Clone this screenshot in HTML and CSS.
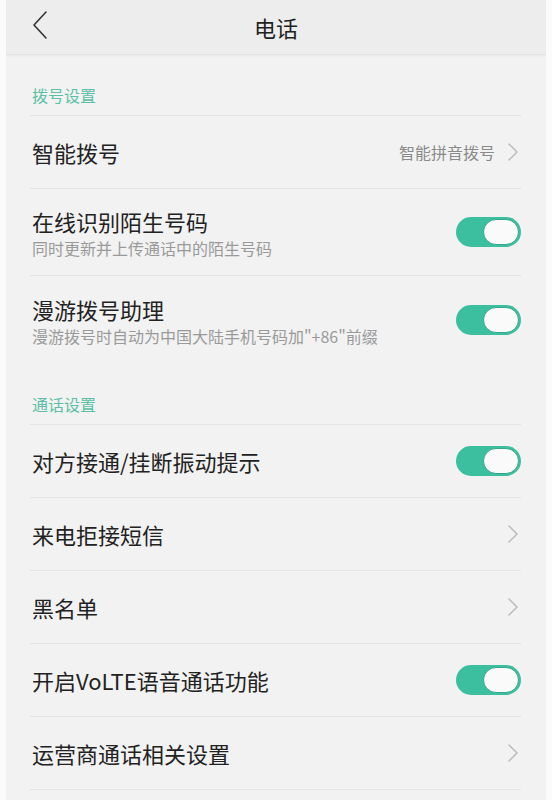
FILE: index.html
```html
<!DOCTYPE html>
<html lang="zh-CN">
<head>
<meta charset="utf-8">
<title>电话</title>
<link rel="stylesheet" href="styles.css">
</head>
<body>
<div class="screen">
  <header class="topbar">
    <svg class="back" width="18" height="30" viewBox="0 0 18 30"><path d="M15 2 L3 15 L15 28" fill="none" stroke="#333" stroke-width="1.6" stroke-linecap="round" stroke-linejoin="round"/></svg>
    <h1 class="title">电话</h1>
  </header>
  <main class="content">
    <div class="section first">拨号设置</div>
    <div class="row single">
      <div class="label">智能拨号</div>
      <div class="value">智能拼音拨号</div>
      <svg class="chev" width="12" height="20" viewBox="0 0 12 20"><path d="M2 2 L10 10 L2 18" fill="none" stroke="#bdbdbd" stroke-width="1.6" stroke-linecap="round" stroke-linejoin="round"/></svg>
    </div>
    <div class="row double">
      <div class="texts">
        <div class="label">在线识别陌生号码</div>
        <div class="sub">同时更新并上传通话中的陌生号码</div>
      </div>
      <div class="toggle"><span class="knob"></span></div>
    </div>
    <div class="row double last">
      <div class="texts">
        <div class="label">漫游拨号助理</div>
        <div class="sub">漫游拨号时自动为中国大陆手机号码加"+86"前缀</div>
      </div>
      <div class="toggle"><span class="knob"></span></div>
    </div>
    <div class="section">通话设置</div>
    <div class="row single">
      <div class="label">对方接通/挂断振动提示</div>
      <div class="toggle"><span class="knob"></span></div>
    </div>
    <div class="row single">
      <div class="label">来电拒接短信</div>
      <svg class="chev" width="12" height="20" viewBox="0 0 12 20"><path d="M2 2 L10 10 L2 18" fill="none" stroke="#bdbdbd" stroke-width="1.6" stroke-linecap="round" stroke-linejoin="round"/></svg>
    </div>
    <div class="row single">
      <div class="label">黑名单</div>
      <svg class="chev" width="12" height="20" viewBox="0 0 12 20"><path d="M2 2 L10 10 L2 18" fill="none" stroke="#bdbdbd" stroke-width="1.6" stroke-linecap="round" stroke-linejoin="round"/></svg>
    </div>
    <div class="row single">
      <div class="label">开启VoLTE语音通话功能</div>
      <div class="toggle"><span class="knob"></span></div>
    </div>
    <div class="row single">
      <div class="label">运营商通话相关设置</div>
      <svg class="chev" width="12" height="20" viewBox="0 0 12 20"><path d="M2 2 L10 10 L2 18" fill="none" stroke="#bdbdbd" stroke-width="1.6" stroke-linecap="round" stroke-linejoin="round"/></svg>
    </div>
  </main>
</div>
</body>
</html>
```
FILE: styles.css
```css
html, body {
  margin: 0;
  padding: 0;
  background: #fbfbfb;
}
body {
  font-family: "Noto Sans CJK SC", "Noto Sans", sans-serif;
}
.screen {
  margin: 0 6px;
  height: 800px;
  background: #f2f2f2;
  overflow: hidden;
}
.topbar {
  height: 54px;
  background: #ededed;
  border-bottom: 1px solid #e2e2e2;
  box-shadow: 0 1px 2px rgba(0,0,0,0.04);
  display: flex;
  align-items: center;
  justify-content: center;
  position: relative;
}
.back {
  position: absolute;
  left: 25px;
  top: 10px;
}
.title {
  margin: 0;
  font-size: 22px;
  font-weight: 400;
  color: #222;
  line-height: 28px;
}
.content {
  padding: 0 25px 0 24px;
}
.section {
  height: 62px;
  box-sizing: border-box;
  padding-bottom: 10px;
  display: flex;
  align-items: flex-end;
  font-size: 16px;
  line-height: 20px;
  color: #5dbfa6;
  padding-left: 2px;
  border-bottom: 1px solid #e4e4e4;
}
.section.first {
  height: 61px;
}
.row {
  display: flex;
  align-items: center;
  box-sizing: border-box;
  border-bottom: 1px solid #e4e4e4;
  padding-left: 2px;
}
.row.single {
  height: 73px;
}
.row.double {
  height: 87px;
}
.row.last {
  border-bottom: none;
}
.texts {
  flex: 1;
  display: flex;
  flex-direction: column;
  padding-top: 2px;
}
.label {
  flex: 1;
  font-size: 22px;
  line-height: 28px;
  color: #222;
}
.texts .label {
  flex: none;
}
.sub {
  font-size: 16px;
  line-height: 22px;
  color: #9a9a9a;
  margin-top: 2px;
}
.value {
  font-size: 16px;
  color: #8a8a8a;
  margin-right: 12px;
}
.chev {
  margin-right: 2px;
}
.toggle {
  width: 65px;
  height: 30px;
  border-radius: 15px;
  background: #3cbf9e;
  display: flex;
  align-items: center;
  justify-content: flex-end;
  padding-right: 2px;
  box-sizing: border-box;
}
.knob {
  width: 36px;
  height: 26px;
  border-radius: 13px;
  background: #fafafa;
  box-sizing: border-box;
  border: 1.5px solid #35a88a;
}
```
